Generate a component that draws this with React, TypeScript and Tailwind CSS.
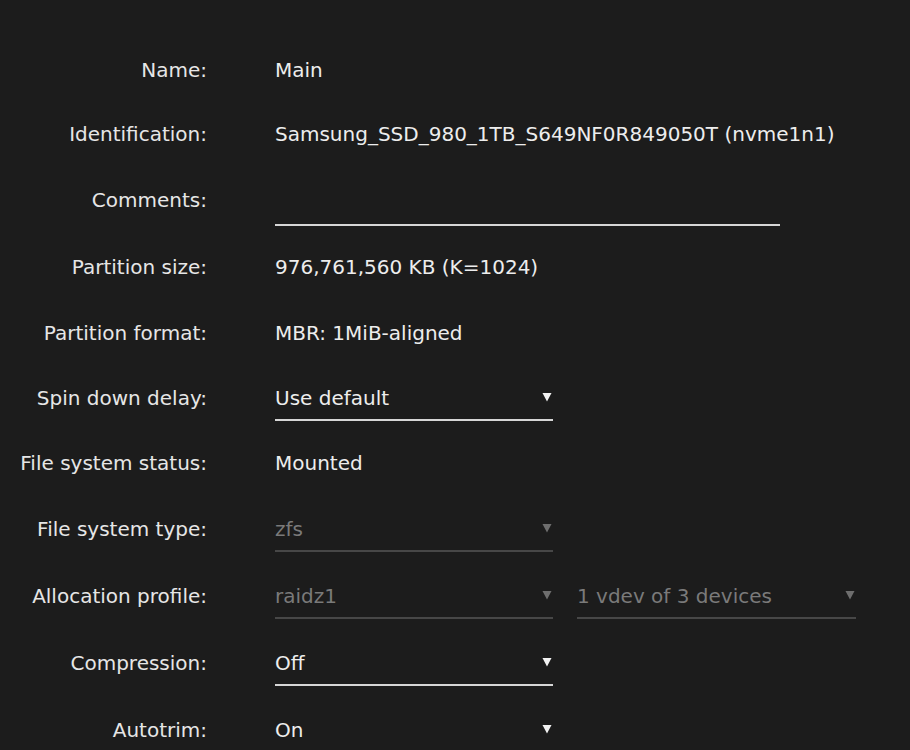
import React from 'react';

// Disk settings form (dark theme)
function Arrow({ disabled }: { disabled?: boolean }) {
  return (
    <svg width="10" height="10" viewBox="0 0 10 10" className="shrink-0">
      <polygon points="0.5,1 9.5,1 5,9.5" fill={disabled ? '#6e6e6e' : '#f2f2f2'} />
    </svg>
  );
}

function Select({ value, disabled, width = 'w-[278px]' }: { value: string; disabled?: boolean; width?: string }) {
  return (
    <div
      className={`${width} h-[46px] flex items-center justify-between pr-[1px] border-b-2 ${
        disabled ? 'border-[#474747] text-[#7a7a7a]' : 'border-[#d6d6d6] text-[#ededed]'
      }`}
    >
      <span className="pt-[2px]">{value}</span>
      <Arrow disabled={disabled} />
    </div>
  );
}

function Row({ label, h, children }: { label: string; h: string; children: React.ReactNode }) {
  return (
    <div className={`flex items-center ${h}`}>
      <div className="w-[207px] shrink-0 text-right text-[#e6e6e6]">{label}</div>
      <div className="ml-[68px] flex items-center gap-[24px] text-[#ededed]">{children}</div>
    </div>
  );
}

export default function App() {
  return (
    <div
      className="min-h-[750px] w-[910px] bg-[#1c1c1c] pt-[38px] text-[20px] overflow-hidden"
      style={{ fontFamily: '"DejaVu Sans", "Noto Sans", sans-serif' }}
    >
      <Row label="Name:" h="h-[64px]">
        <span>Main</span>
      </Row>
      <Row label="Identification:" h="h-[64px]">
        <span>Samsung_SSD_980_1TB_S649NF0R849050T (nvme1n1)</span>
      </Row>
      <Row label="Comments:" h="h-[67px]">
        <div className="w-[505px] h-[52px] border-b-2 border-[#d6d6d6]" />
      </Row>
      <Row label="Partition size:" h="h-[67px]">
        <span>976,761,560 KB (K=1024)</span>
      </Row>
      <Row label="Partition format:" h="h-[65px]">
        <span>MBR: 1MiB-aligned</span>
      </Row>
      <Row label="Spin down delay:" h="h-[65px]">
        <Select value="Use default" />
      </Row>
      <Row label="File system status:" h="h-[66px]">
        <span>Mounted</span>
      </Row>
      <Row label="File system type:" h="h-[66px]">
        <Select value="zfs" disabled />
      </Row>
      <Row label="Allocation profile:" h="h-[67px]">
        <Select value="raidz1" disabled />
        <Select value="1 vdev of 3 devices" disabled width="w-[279px]" />
      </Row>
      <Row label="Compression:" h="h-[67px]">
        <Select value="Off" />
      </Row>
      <Row label="Autotrim:" h="h-[67px]">
        <Select value="On" />
      </Row>
    </div>
  );
}
